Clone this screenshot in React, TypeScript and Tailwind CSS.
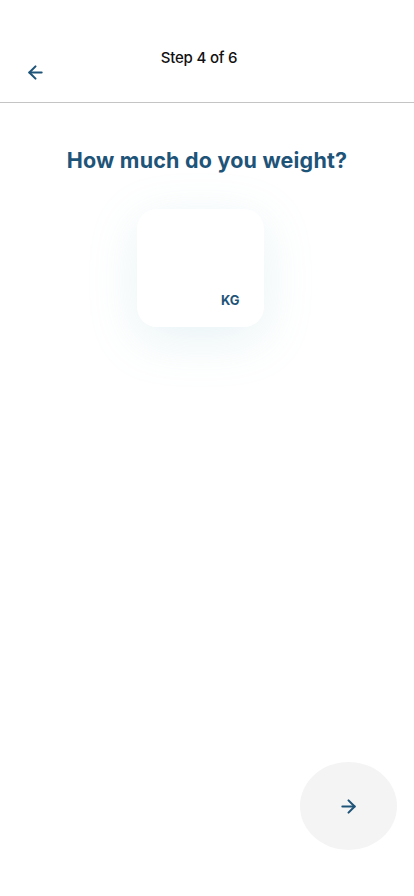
import { ArrowLeft, ArrowRight } from "lucide-react";

export default function App() {
  return (
    <div className="relative h-[896px] w-[414px] bg-white font-['Inter','Noto_Sans',sans-serif] overflow-hidden">
      <header className="relative h-[103px] border-b border-[#c4c4c4]">
        <div className="pt-[47px] pr-[16px] text-center text-[15px] font-medium tracking-[-0.2px] text-[#111]">Step 4 of 6</div>
        <button className="absolute left-[25px] top-[62px] text-[#1f5479]">
          <ArrowLeft size={21} strokeWidth={2.4} />
        </button>
      </header>
      <main className="flex flex-col items-center">
        <h1 className="mt-[41px] text-[21.5px] font-bold tracking-[0.2px] text-[#1f5479]">How much do you weight?</h1>
        <div className="mt-[33px] ml-[-14px] flex h-[118px] w-[127px] items-end justify-end rounded-[20px] bg-white pb-[17px] pr-[24px] shadow-[0_12px_50px_rgba(140,195,205,0.2)]">
          <span className="text-[13px] font-bold text-[#1f5479]">KG</span>
        </div>
      </main>
      <button className="absolute left-[300px] top-[762px] flex h-[88px] w-[97px] items-center justify-center rounded-[50%] bg-[#f4f4f5] text-[#1f5479]">
        <ArrowRight size={21} strokeWidth={2.4} />
      </button>
    </div>
  );
}
